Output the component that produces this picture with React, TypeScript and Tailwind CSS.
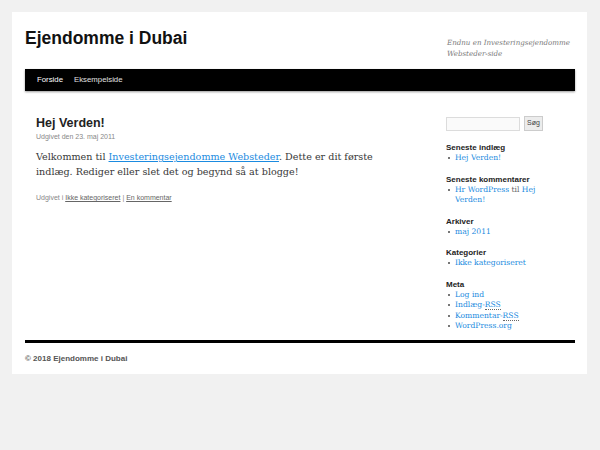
import React from 'react';

const serif = "font-['DejaVu_Serif',serif]";
const sans = "font-['Liberation_Sans',Arial,sans-serif]";

const Bullet = () => <span className="mt-[4px] mr-[5px] h-[2px] w-[2px] shrink-0 bg-[#777]"></span>;

const Item = ({ children }: { children: React.ReactNode }) => (
  <li className="flex items-start">
    <Bullet />
    <span>{children}</span>
  </li>
);

const Widget = ({ title, children }: { title: string; children: React.ReactNode }) => (
  <div className="mb-[10px] last:mb-0">
    <h3 className={`${sans} text-[8px] font-bold leading-[11px] text-[#222]`}>{title}</h3>
    <ul className={`${serif} ml-[2px] text-[7.6px] leading-[10.5px] text-[#1b8be0]`}>{children}</ul>
  </div>
);

const App = () => {
  return (
    <div className="min-h-[450px] bg-[#f1f1f1] pt-[12px]">
      <div className="ml-[12px] w-[575px] bg-white">
        {/* Header */}
        <div className="flex h-[57px] justify-between pl-[13px] pr-[12px]">
          <h1 className={`${sans} mt-[15px] text-[17.5px] font-bold leading-[23px] text-[#111]`}>Ejendomme i Dubai</h1>
          <p className={`${serif} mt-[26px] w-[128px] text-[7.1px] italic leading-[10.5px] text-[#7a7a7a]`}>
            Endnu en Investeringsejendomme Websteder-side
          </p>
        </div>

        {/* Nav */}
        <div className="ml-[13px] mr-[12px] flex h-[22px] items-center bg-black pl-[12px] shadow-[0_1px_2px_rgba(0,0,0,0.4)]">
          <span className={`${sans} text-[7.8px] text-white`}>Forside</span>
          <span className={`${sans} ml-[11px] text-[7.8px] text-[#e0e0e0]`}>Eksempelside</span>
        </div>

        {/* Main */}
        <div className="flex pb-[8px] pl-[24px] pt-[24px]">
          <div className="w-[410px]">
            <h2 className={`${sans} text-[12.5px] font-bold leading-[17px] text-[#222]`}>Hej Verden!</h2>
            <div className={`${sans} text-[7px] leading-[10px] text-[#888]`}>Udgivet den 23. maj 2011</div>
            <p className={`${serif} mt-[8px] w-[360px] text-[9.6px] leading-[14.5px] text-[#373737]`}>
              Velkommen til <span className="text-[#1b8be0] underline">Investeringsejendomme Websteder</span>. Dette er dit første
              indlæg. Rediger eller slet det og begynd så at blogge!
            </p>
            <div className={`${sans} mt-[14px] text-[7px] leading-[10px] text-[#888]`}>
              Udgivet i <span className="text-[#666] underline">Ikke kategoriseret</span> | <span className="text-[#666] underline">En kommentar</span>
            </div>
          </div>

          <div className="w-[115px] pt-[1px]">
            <div className="flex items-center">
              <div className="h-[14px] w-[74px] border border-[#dcdcdc] bg-[#fafafa]"></div>
              <div className={`${sans} ml-[4px] flex h-[15px] w-[19px] items-center justify-center border border-[#ccc] bg-[#ececec] text-[7px] text-[#444]`}>
                Søg
              </div>
            </div>
            <div className="mt-[11px]">
              <Widget title="Seneste indlæg">
                <Item>Hej Verden!</Item>
              </Widget>
              <Widget title="Seneste kommentarer">
                <Item>
                  Hr WordPress <span className="text-[#666]">til</span> Hej Verden!
                </Item>
              </Widget>
              <Widget title="Arkiver">
                <Item>maj 2011</Item>
              </Widget>
              <Widget title="Kategorier">
                <Item>Ikke kategoriseret</Item>
              </Widget>
              <Widget title="Meta">
                <Item>Log ind</Item>
                <Item>
                  Indlæg-<span className="border-b border-dotted border-[#666]">RSS</span>
                </Item>
                <Item>
                  Kommentar-<span className="border-b border-dotted border-[#666]">RSS</span>
                </Item>
                <Item>WordPress.org</Item>
              </Widget>
            </div>
          </div>
        </div>

        {/* Footer */}
        <div className="ml-[13px] mr-[12px] border-t-[3px] border-black pb-[10px] pt-[11px]">
          <div className={`${sans} text-[8px] font-bold leading-[10px] text-[#555]`}>© 2018 Ejendomme i Dubai</div>
        </div>
      </div>
    </div>
  );
};

export default App;
